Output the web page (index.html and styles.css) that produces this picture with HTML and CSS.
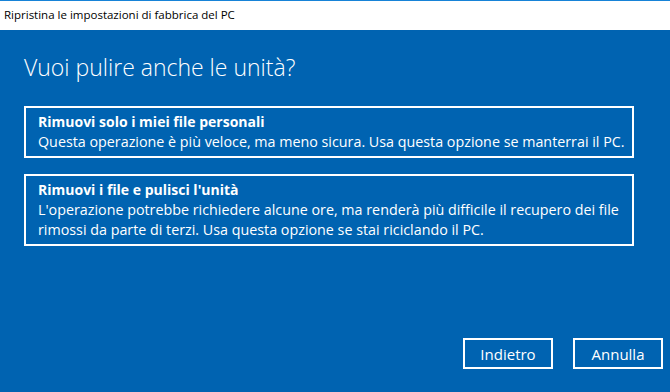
FILE: index.html
```html
<!DOCTYPE html>
<html lang="it">
<head>
    <meta charset="utf-8">
    <title>Ripristina le impostazioni di fabbrica del PC</title>
    <link rel="stylesheet" href="styles.css">
</head>
<body>
    <div class="titlebar">Ripristina le impostazioni di fabbrica del PC</div>
    <main class="page">
        <h1>Vuoi pulire anche le unità?</h1>
        <ul class="options">
            <li class="option">
                <h2>Rimuovi solo i miei file personali</h2>
                <p>Questa operazione è più veloce, ma meno sicura. Usa questa opzione se manterrai il PC.</p>
            </li>
            <li class="option">
                <h2>Rimuovi i file e pulisci l'unità</h2>
                <p>L'operazione potrebbe richiedere alcune ore, ma renderà più difficile il recupero dei file rimossi da parte di terzi. Usa questa opzione se stai riciclando il PC.</p>
            </li>
        </ul>
        <div class="actions">
            <button>Indietro</button>
            <button>Annulla</button>
        </div>
    </main>
</body>
</html>
```

FILE: styles.css
```css
:root {
    box-sizing: border-box;
}
:root * {
    box-sizing: inherit;
}
html,
body {
    height: 100%;
}
body {
    display: flex;
    flex-direction: column;
    font-family: "Open Sans", "Noto Sans", sans-serif;
    margin: 0;
    overflow: hidden;
}
.titlebar {
    background-color: #FFF;
    border-top: 1px solid #1783D7;
    color: #000;
    font-size: 11.5px;
    height: 30px;
    line-height: 28px;
    padding: 0 4px;
}
.page {
    background-color: #0063B1;
    color: #FFF;
    display: flex;
    flex: 1;
    flex-direction: column;
    padding: 22px 36px 23px 24px;
}
h1 {
    font-size: 23px;
    font-weight: 300;
    line-height: 30px;
    margin: 0;
}
.options {
    display: flex;
    flex-direction: column;
    gap: 16px;
    list-style: none;
    margin: 24px 0 0;
    padding: 0;
}
.option {
    border: 2px solid #FFF;
    padding: 4px 4px 4px 12px;
}
h2 {
    font-size: 14px;
    font-weight: 700;
    line-height: 20px;
    margin: 0;
}
.option p {
    font-size: 14.3px;
    line-height: 20px;
    margin: 0;
}
.actions {
    display: flex;
    gap: 20px;
    justify-content: flex-end;
    margin: auto -29px 0 0;
}
button {
    background-color: transparent;
    border: 2px solid #FFF;
    color: #FFF;
    font: inherit;
    font-size: 15px;
    height: 31px;
    padding: 0;
    width: 90px;
}
```
